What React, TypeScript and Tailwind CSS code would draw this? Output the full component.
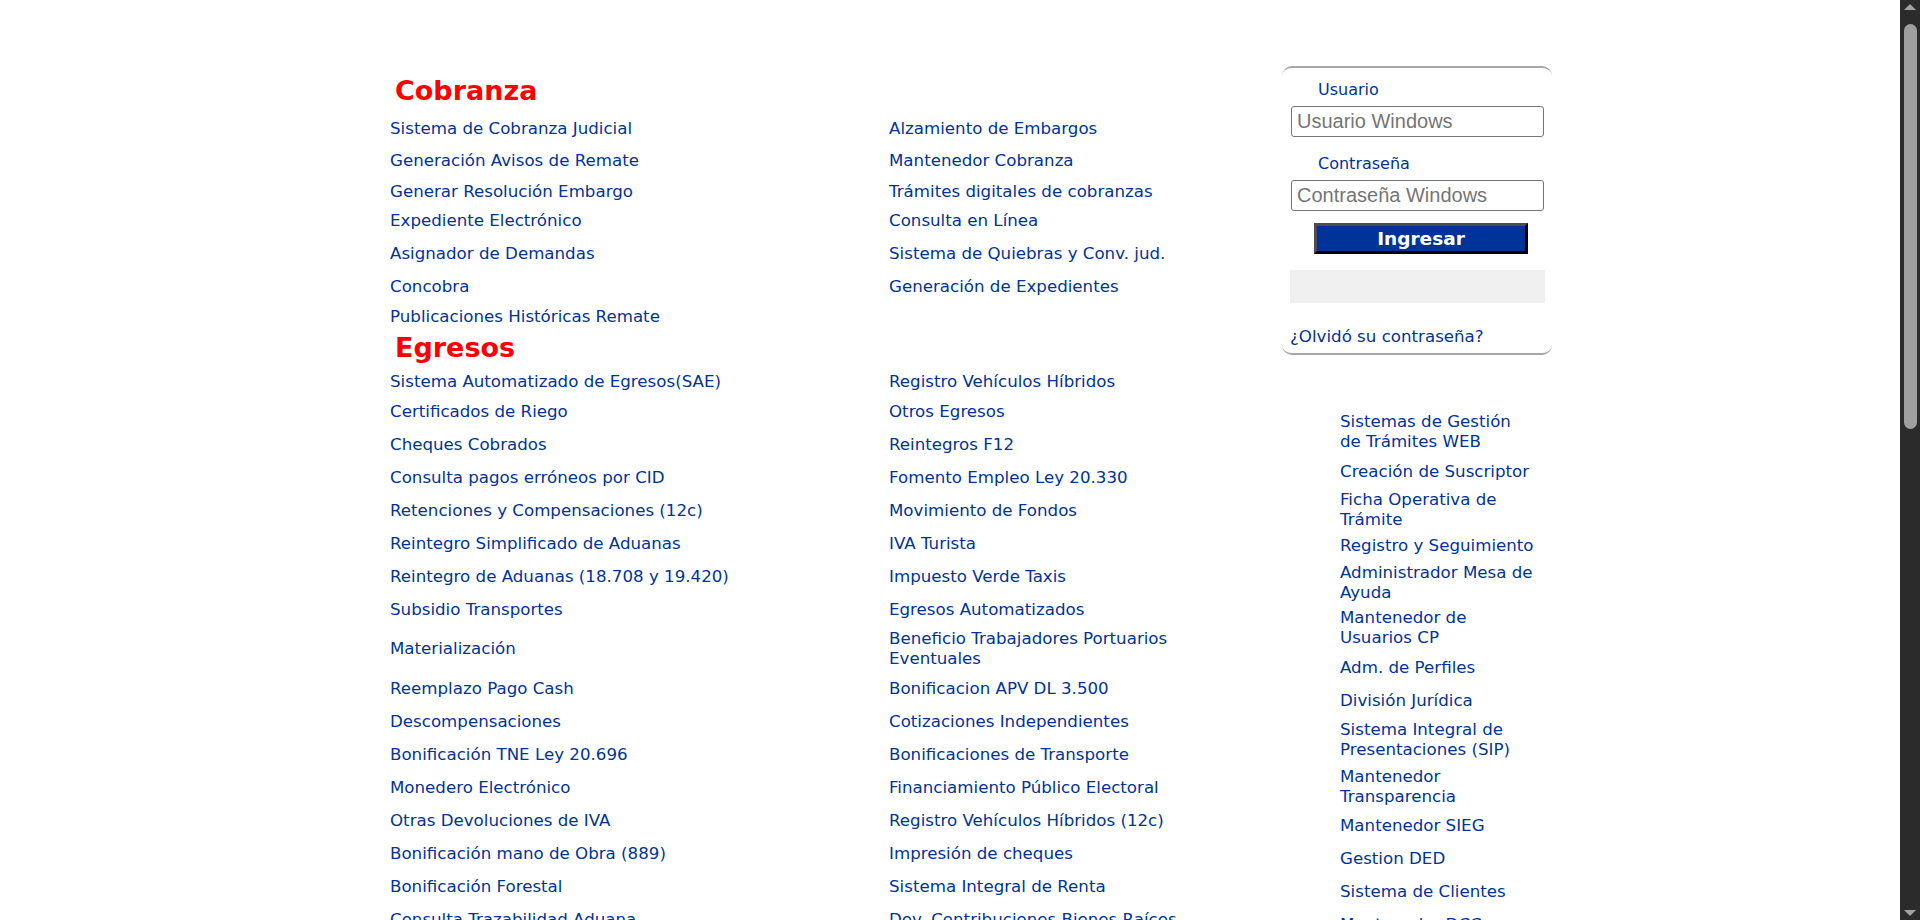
import React from 'react'

type Row = { a: string; b?: string; h: number }

const cobranza: Row[] = [
  { a: 'Sistema de Cobranza Judicial', b: 'Alzamiento de Embargos', h: 33 },
  { a: 'Generación Avisos de Remate', b: 'Mantenedor Cobranza', h: 32 },
  { a: 'Generar Resolución Embargo', b: 'Trámites digitales de cobranzas', h: 29 },
  { a: 'Expediente Electrónico', b: 'Consulta en Línea', h: 30 },
  { a: 'Asignador de Demandas', b: 'Sistema de Quiebras y Conv. jud.', h: 36 },
  { a: 'Concobra', b: 'Generación de Expedientes', h: 30 },
  { a: 'Publicaciones Históricas Remate', h: 30 },
]

const egresos: Row[] = [
  { a: 'Sistema Automatizado de Egresos(SAE)', b: 'Registro Vehículos Híbridos', h: 28 },
  { a: 'Certificados de Riego', b: 'Otros Egresos', h: 32 },
  { a: 'Cheques Cobrados', b: 'Reintegros F12', h: 33 },
  { a: 'Consulta pagos erróneos por CID', b: 'Fomento Empleo Ley 20.330', h: 33 },
  { a: 'Retenciones y Compensaciones (12c)', b: 'Movimiento de Fondos', h: 33 },
  { a: 'Reintegro Simplificado de Aduanas', b: 'IVA Turista', h: 33 },
  { a: 'Reintegro de Aduanas (18.708 y 19.420)', b: 'Impuesto Verde Taxis', h: 33 },
  { a: 'Subsidio Transportes', b: 'Egresos Automatizados', h: 33 },
  { a: 'Materialización', b: 'Beneficio Trabajadores Portuarios Eventuales', h: 46 },
  { a: 'Reemplazo Pago Cash', b: 'Bonificacion APV DL 3.500', h: 33 },
  { a: 'Descompensaciones', b: 'Cotizaciones Independientes', h: 33 },
  { a: 'Bonificación TNE Ley 20.696', b: 'Bonificaciones de Transporte', h: 33 },
  { a: 'Monedero Electrónico', b: 'Financiamiento Público Electoral', h: 33 },
  { a: 'Otras Devoluciones de IVA', b: 'Registro Vehículos Híbridos (12c)', h: 33 },
  { a: 'Bonificación mano de Obra (889)', b: 'Impresión de cheques', h: 33 },
  { a: 'Bonificación Forestal', b: 'Sistema Integral de Renta', h: 33 },
  { a: 'Consulta Trazabilidad Aduana', b: 'Dev. Contribuciones Bienes Raíces', h: 33 },
]

const sideLinks: { lines: string[]; h: number }[] = [
  { lines: ['Sistemas de Gestión', 'de Trámites WEB'], h: 40 },
  { lines: ['Creación de Suscriptor'], h: 39 },
  { lines: ['Ficha Operativa de', 'Trámite'], h: 38 },
  { lines: ['Registro y Seguimiento'], h: 33 },
  { lines: ['Administrador Mesa de', 'Ayuda'], h: 42 },
  { lines: ['Mantenedor de', 'Usuarios CP'], h: 47 },
  { lines: ['Adm. de Perfiles'], h: 34 },
  { lines: ['División Jurídica'], h: 32 },
  { lines: ['Sistema Integral de', 'Presentaciones (SIP)'], h: 46 },
  { lines: ['Mantenedor', 'Transparencia'], h: 48 },
  { lines: ['Mantenedor SIEG'], h: 30 },
  { lines: ['Gestion DED'], h: 36 },
  { lines: ['Sistema de Clientes'], h: 30 },
  { lines: ['Mantenedor DCC'], h: 36 },
]

function Section({ title, rows, pt }: { title: string; rows: Row[]; pt: string }) {
  return (
    <div>
      <h2 className={`h-[36px] pl-[5px] text-[27px] font-bold leading-[30px] text-[#ff0000] ${pt}`}>
        {title}
      </h2>
      {rows.map((r) => (
        <div key={r.a} className="flex items-center" style={{ height: r.h }}>
          <a href="#" className="w-[499px] text-[16.67px] leading-[20px] text-[#003399]">
            {r.a}
          </a>
          {r.b && (
            <a href="#" className="w-[290px] text-[16.67px] leading-[20px] text-[#003399]">
              {r.b}
            </a>
          )}
        </div>
      ))}
    </div>
  )
}

function LoginBox() {
  return (
    <div className="w-[270px] rounded-[10px] border-y-2 border-[#a6a6a6] pt-[12px] pb-[6px]">
      <label htmlFor="user" className="block pl-[36px] text-[16px] leading-[20px] text-[#003399]">
        Usuario
      </label>
      <input
        id="user"
        type="text"
        placeholder="Usuario Windows"
        className="mt-[6px] ml-[9px] block h-[31px] w-[253px] rounded-[3px] border border-[#767676] px-[5px] font-['Liberation_Sans',sans-serif] text-[20px] placeholder:text-[#757575]"
      />
      <label htmlFor="pass" className="mt-[17px] block pl-[36px] text-[16px] leading-[20px] text-[#003399]">
        Contraseña
      </label>
      <input
        id="pass"
        type="password"
        placeholder="Contraseña Windows"
        className="mt-[6px] ml-[9px] block h-[31px] w-[253px] rounded-[3px] border border-[#767676] px-[5px] font-['Liberation_Sans',sans-serif] text-[20px] placeholder:text-[#757575]"
      />
      <button
        type="button"
        className="mt-[12px] ml-[32px] block h-[31px] w-[214px] border-[3px] border-t-[#4d4d4d] border-l-[#4d4d4d] border-r-black border-b-black bg-[#003399] text-[18.5px] font-bold leading-[20px] text-white"
      >
        Ingresar
      </button>
      <div className="mt-[16px] ml-[8px] h-[33px] w-[255px] bg-[#f0f0f0]"></div>
      <a href="#" className="mt-[24px] ml-[8px] block text-[16.67px] leading-[20px] text-[#003399]">
        ¿Olvidó su contraseña?
      </a>
    </div>
  )
}

function Scrollbar() {
  return (
    <div className="fixed top-0 right-0 flex h-screen w-[20px] flex-col items-center bg-[#2b2b2b]">
      <div className="mt-[4px] h-0 w-0 border-x-[6px] border-b-[6px] border-x-transparent border-b-[#a3a3a3]"></div>
      <div className="mt-[14px] h-[405px] w-[13px] rounded-full bg-[#9f9f9f]"></div>
      <div className="mt-auto mb-[4px] h-0 w-0 border-x-[6px] border-t-[6px] border-x-transparent border-t-[#a3a3a3]"></div>
    </div>
  )
}

export default function App() {
  return (
    <div className="bg-white font-['DejaVu_Sans',sans-serif]">
      <div className="flex pt-[66px] pl-[390px]">
        <div className="w-[892px] pt-[10px]">
          <Section title="Cobranza" rows={cobranza} pt="" />
          <Section title="Egresos" rows={egresos} pt="pt-[1px]" />
        </div>
        <div className="w-[270px]">
          <LoginBox />
          <div className="mt-[57px] pl-[58px]">
            {sideLinks.map((l) => (
              <div key={l.lines[0]} className="flex items-center" style={{ height: l.h }}>
                <a href="#" className="text-[16.67px] leading-[20px] text-[#003399]">
                  {l.lines.map((t, i) => (
                    <React.Fragment key={t}>
                      {i > 0 && <br />}
                      {t}
                    </React.Fragment>
                  ))}
                </a>
              </div>
            ))}
          </div>
        </div>
      </div>
      <Scrollbar />
    </div>
  )
}
